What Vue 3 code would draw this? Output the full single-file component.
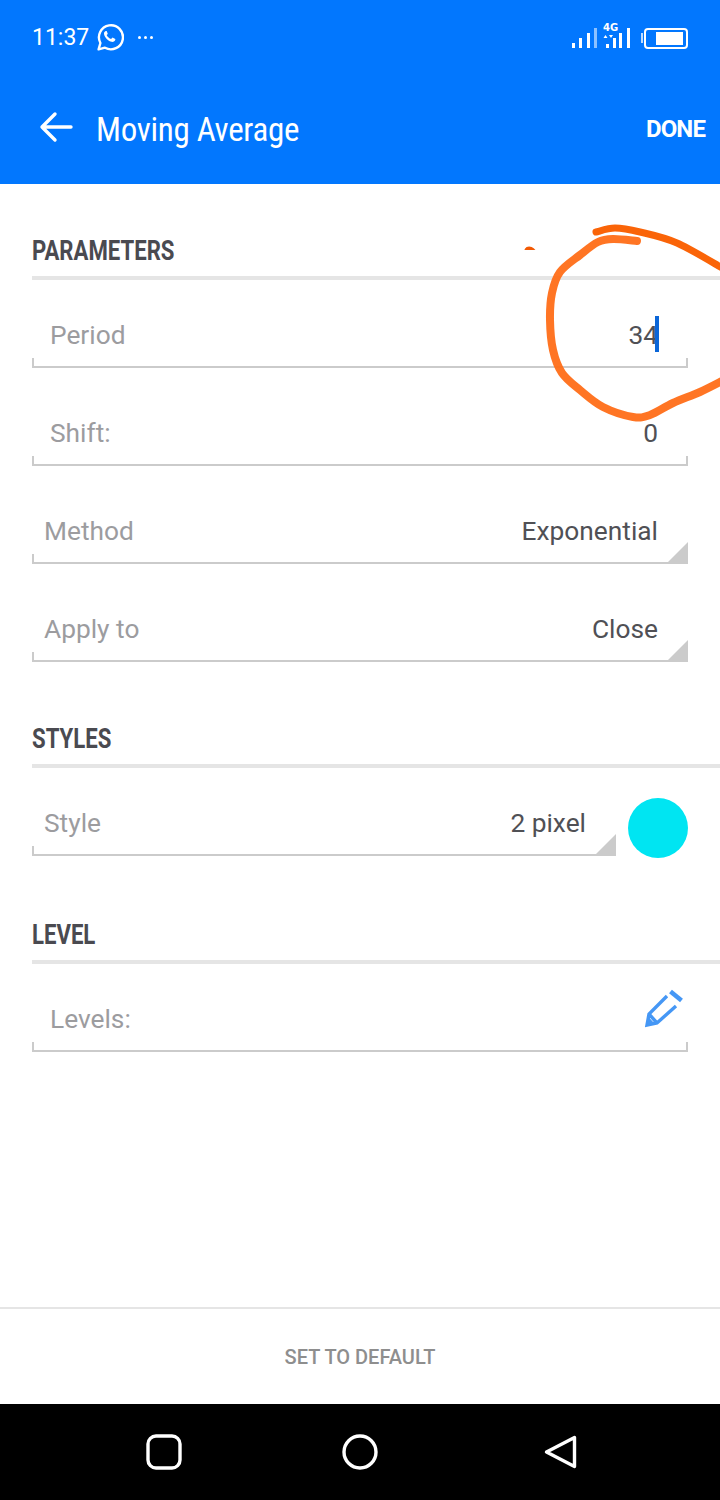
<template>
  <div class="screen">
    <header class="top">
      <div class="status">
        <div class="status-left">
          <span class="clock">11:37</span>
          <svg class="wa" width="28" height="28" viewBox="0 0 28 28">
            <path d="M2.600 26.400l1.800-6.400A12 12 0 1 1 9 24.700z" fill="none" stroke="#fff" stroke-width="2.400" stroke-linejoin="round" />
            <path d="M10.200 7.900c-.5 0-1.300.3-1.800 1.200-.8 1.400-.4 3.200 1 5.100 1.700 2.400 3.700 4 6 4.600 1.600.4 3-.2 3.600-1.300.3-.6.4-1.200.3-1.500l-2.800-1.500-1.400 1.600c-1.900-.6-3.400-2-4.500-4l1.200-1.200-1.100-2.900z" fill="#fff" />
          </svg>
          <span class="dots"><i></i><i></i><i></i></span>
        </div>
        <svg class="status-right" width="118" height="32" viewBox="0 0 118 32">
          <g fill="#fff">
            <rect x="2" y="22" width="3" height="5" />
            <rect x="9" y="17" width="3" height="10" />
            <rect x="17" y="12" width="3" height="15" />
            <rect x="24" y="7" width="3" height="20" opacity=".55" />
            <rect x="36" y="23" width="3" height="4" />
            <rect x="43" y="17" width="3" height="10" />
            <rect x="49" y="12" width="3" height="15" />
            <rect x="57" y="7" width="3" height="20" />
            <path d="M33.500 17l2-3 2 3zM39 14l2 3 2-3z" />
            <rect x="71" y="12" width="2" height="10" opacity=".75" />
            <rect x="86" y="11" width="27" height="13" />
          </g>
          <text x="33" y="10" class="net">4G</text>
          <rect x="75" y="8" width="42" height="19" rx="3" fill="none" stroke="#fff" stroke-width="2" />
        </svg>
      </div>
      <div class="bar">
        <svg class="back" width="36" height="32" viewBox="0 0 36 32">
          <path d="M3 16h29M16 3L3 16l13 13" fill="none" stroke="#fff" stroke-width="3.400" stroke-linecap="round" stroke-linejoin="round" />
        </svg>
        <h1 class="title">Moving Average</h1>
        <span class="done">DONE</span>
      </div>
    </header>

    <main class="body">
      <section v-for="group in groups" :key="group.name" class="group">
        <h2 class="group-name"><span>{{ group.name }}</span></h2>
        <div
          v-for="row in group.rows"
          :key="row.label"
          class="row"
          :class="row.kind"
        >
          <div class="field">
            <span class="label">{{ row.label }}</span>
            <span v-if="row.value" class="value">
              {{ row.value }}<i v-if="row.caret" class="caret"></i>
            </span>
            <svg v-if="row.kind === 'edit'" class="pencil" width="40" height="40" viewBox="0 0 40 40">
              <path d="M23 8L5 26 3 37l10-2 19-17M5 26l8 9" fill="none" stroke="#4597f5" stroke-width="3.400" />
              <path d="M3 37l1.500-8 6 6.500z" fill="#4597f5" />
              <path d="M26.500 3.500l11 9" fill="none" stroke="#4597f5" stroke-width="4.500" />
            </svg>
          </div>
          <div v-if="row.color" class="swatch" :style="{ background: row.color }"></div>
        </div>
      </section>
    </main>

    <div class="reset">SET TO DEFAULT</div>

    <nav class="nav">
      <svg width="36" height="36" viewBox="0 0 36 36">
        <rect x="2" y="2" width="32" height="32" rx="8" fill="none" stroke="#fff" stroke-width="3.400" />
      </svg>
      <svg width="36" height="36" viewBox="0 0 36 36">
        <circle cx="18" cy="18" r="16" fill="none" stroke="#fff" stroke-width="3.400" />
      </svg>
      <svg class="nav-back" width="36" height="36" viewBox="0 0 36 36">
        <path d="M31.500 3.500v29L3.500 18z" fill="none" stroke="#fff" stroke-width="3.400" stroke-linejoin="round" />
      </svg>
    </nav>

    <svg class="scribble" width="720" height="1500" viewBox="0 0 720 1500">
      <path d="M526 249c1-2 5-2 7 0z" fill="#f25a05" stroke="#f25a05" stroke-width="2" />
      <path :d="smooth(loop)" class="stroke" stroke="#ff6a13" stroke-width="8" opacity=".93" />
      <path :d="smooth(top)" class="stroke" stroke="#fa6408" stroke-width="7" />
    </svg>
  </div>
</template>

<script setup>
const groups = [
  {
    name: 'PARAMETERS',
    rows: [
      { label: 'Period', value: '34', kind: 'input', caret: true },
      { label: 'Shift:', value: '0', kind: 'input' },
      { label: 'Method', value: 'Exponential', kind: 'select' },
      { label: 'Apply to', value: 'Close', kind: 'select' }
    ]
  },
  {
    name: 'STYLES',
    rows: [{ label: 'Style', value: '2 pixel', kind: 'select', color: '#00e5f2' }]
  },
  {
    name: 'LEVEL',
    rows: [{ label: 'Levels:', kind: 'edit' }]
  }
]

const loop = [
  [637, 241], [613, 239], [598, 242], [580, 255], [560, 272], [552, 293], [550, 320],
  [553, 350], [562, 373], [580, 390], [603, 407], [633, 417], [650, 415], [673, 403],
  [700, 392], [724, 380]
]
const top = [[596, 232], [615, 228], [640, 232], [677, 243], [724, 269]]

// catmull-rom through the points of a hand-drawn stroke
function smooth(pts) {
  let d = `M${pts[0][0]} ${pts[0][1]}`
  for (let i = 0; i < pts.length - 1; i++) {
    const p0 = pts[i - 1] || pts[i]
    const p1 = pts[i]
    const p2 = pts[i + 1]
    const p3 = pts[i + 2] || p2
    const c1 = [p1[0] + (p2[0] - p0[0]) / 6, p1[1] + (p2[1] - p0[1]) / 6]
    const c2 = [p2[0] - (p3[0] - p1[0]) / 6, p2[1] - (p3[1] - p1[1]) / 6]
    d += `C${c1[0]} ${c1[1]} ${c2[0]} ${c2[1]} ${p2[0]} ${p2[1]}`
  }
  return d
}
</script>

<style>
html, body {
  margin: 0;
  background: #fff;
}
</style>

<style scoped>
.screen {
  position: relative;
  width: 720px;
  height: 1500px;
  display: flex;
  flex-direction: column;
  overflow: hidden;
  background: #fff;
  font-family: Roboto, "Liberation Sans", sans-serif;
}

.top {
  height: 184px;
  background: #0277fe;
  color: #fff;
  flex-shrink: 0;
}

.status {
  height: 74px;
  display: flex;
  align-items: center;
  padding: 0 32px;
  box-sizing: border-box;
}

.status-left {
  display: flex;
  align-items: center;
  flex: 1;
}

.clock {
  font-size: 23px;
}

.wa {
  margin-left: 7px;
}

.dots {
  display: flex;
  gap: 3px;
  margin-left: 14px;
}

.dots i {
  width: 3px;
  height: 3px;
  border-radius: 50%;
  background: #fff;
}

.net {
  font-size: 10px;
  font-weight: 700;
  fill: #fff;
  font-family: "DejaVu Sans", sans-serif;
}

.bar {
  height: 110px;
  display: flex;
  align-items: center;
  padding: 0 15px 0 39px;
}

.back {
  margin-top: -4px;
}

.title {
  flex: 1;
  margin: 0 0 0 21px;
  font-size: 33px;
  font-weight: 400;
  font-stretch: 75%;
  letter-spacing: -0.3px;
  white-space: nowrap;
}

.done {
  font-size: 24px;
  font-weight: 700;
  letter-spacing: -0.9px;
}

.body {
  flex: 1;
  padding-left: 32px;
}

.group {
  padding-top: 60px;
}

.group:first-child {
  padding-top: 50px;
}

.group:last-child {
  padding-top: 62px;
}

.group-name {
  margin: 0;
  height: 46px;
  box-sizing: border-box;
  border-bottom: 4px solid #e5e5e5;
  font-size: 27px;
  line-height: 34px;
  font-weight: 700;
  color: #4a4a50;
  white-space: nowrap;
}

.group-name span {
  display: inline-block;
  transform: scaleX(0.82);
  transform-origin: left center;
}

.row {
  display: flex;
  align-items: flex-start;
  width: 656px;
  height: 98px;
}

.row:nth-child(2) {
  height: 88px;
}

.field {
  position: relative;
  flex: 1;
  height: 100%;
  box-sizing: border-box;
  display: flex;
  align-items: flex-end;
  justify-content: space-between;
  border-bottom: 2px solid #cbcbcb;
  color: #505055;
  font-size: 26.300px;
  line-height: 32px;
}

.label {
  color: #9c9c9f;
}

.value {
  position: relative;
}

.input .field,
.edit .field {
  padding: 0 30px 15px 18px;
}

.select .field {
  padding: 0 30px 15px 12px;
}

.field::before {
  content: "";
  position: absolute;
  left: 0;
  bottom: 0;
  width: 2px;
  height: 8px;
  background: #cbcbcb;
}

.input .field::after,
.edit .field::after {
  content: "";
  position: absolute;
  right: 0;
  bottom: 0;
  width: 2px;
  height: 8px;
  background: #cbcbcb;
}

.select .field::after {
  content: "";
  position: absolute;
  right: 0;
  bottom: 0;
  width: 0;
  height: 0;
  border-left: 20px solid transparent;
  border-bottom: 20px solid #cbcbcb;
}

.caret {
  position: absolute;
  right: -1px;
  top: -3px;
  width: 4px;
  height: 36px;
  background: #0b66d8;
}

.pencil {
  position: absolute;
  right: 4px;
  top: 24px;
}

.swatch {
  flex-shrink: 0;
  width: 60px;
  height: 60px;
  border-radius: 50%;
  margin: 30px 0 0 12px;
}

.reset {
  height: 97px;
  flex-shrink: 0;
  box-sizing: border-box;
  border-top: 2px solid #e5e5e5;
  display: flex;
  align-items: center;
  justify-content: center;
  font-size: 20px;
  font-weight: 500;
  color: #8e8e8e;
}

.nav {
  height: 96px;
  flex-shrink: 0;
  background: #000;
  display: flex;
  align-items: center;
  gap: 160px;
  padding-left: 146px;
}

.nav-back {
  margin-left: 5px;
}

.scribble {
  position: absolute;
  top: 0;
  left: 0;
  pointer-events: none;
}

.stroke {
  fill: none;
  stroke-linecap: round;
  stroke-linejoin: round;
}
</style>
